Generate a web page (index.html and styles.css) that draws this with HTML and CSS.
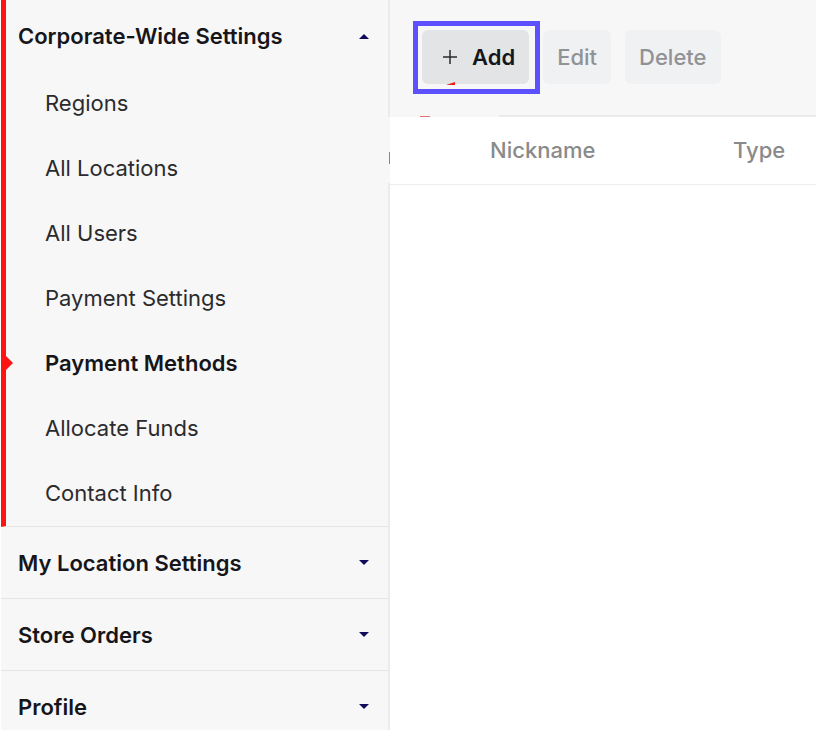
FILE: index.html
```html
<!DOCTYPE html>
<html lang="en">
<head>
  <meta charset="UTF-8">
  <title>Payment Methods</title>
  <link rel="stylesheet" href="styles.css">
</head>
<body>

  <div class="layout">
    <!-- Sidebar -->
    <nav class="sidebar">
      <div class="group open">
        <button class="group-title">Corporate-Wide Settings
          <svg class="caret" viewBox="0 0 10 6"><path d="M0 6 L5 1 L10 6 Z"/></svg>
        </button>
        <ul class="menu">
          <li><a href="#">Regions</a></li>
          <li><a href="#">All Locations</a></li>
          <li><a href="#">All Users</a></li>
          <li><a href="#">Payment Settings</a></li>
          <li class="active"><a href="#">Payment Methods</a></li>
          <li><a href="#">Allocate Funds</a></li>
          <li><a href="#">Contact Info</a></li>
        </ul>
      </div>
      <div class="group">
        <button class="group-title">My Location Settings
          <svg class="caret" viewBox="0 0 10 6"><path d="M0 0 L5 5 L10 0 Z"/></svg>
        </button>
      </div>
      <div class="group">
        <button class="group-title">Store Orders
          <svg class="caret" viewBox="0 0 10 6"><path d="M0 0 L5 5 L10 0 Z"/></svg>
        </button>
      </div>
      <div class="group">
        <button class="group-title">Profile
          <svg class="caret" viewBox="0 0 10 6"><path d="M0 0 L5 5 L10 0 Z"/></svg>
        </button>
      </div>
    </nav>

    <!-- Content -->
    <main class="content">
      <div class="toolbar">
        <div class="highlight">
          <button class="btn btn-add">
            <svg class="plus" viewBox="0 0 16 16"><path d="M8 1 V15 M1 8 H15"/></svg>
            Add
          </button>
          <svg class="mark mark-tip" viewBox="0 0 10 3"><path d="M0 3 L9 0 L9 3 Z"/></svg>
        </div>
        <button class="btn" disabled>Edit</button>
        <button class="btn" disabled>Delete</button>
      </div>
      <table class="methods">
        <thead>
          <tr><th class="col-check"></th><th class="col-name">Nickname</th><th>Type</th></tr>
        </thead>
      </table>
      <span class="mark mark-top"></span>
      <span class="mark mark-side"></span>
    </main>
  </div>

</body>
</html>
```
FILE: styles.css
```css
* {
  box-sizing: border-box;
}
body {
  margin: 0;
  font-family: Inter, "Liberation Sans", sans-serif;
  font-size: 22px;
  color: #16161a;
  background: #fff;
}
.layout {
  display: flex;
  height: 100vh;
  overflow: hidden;
  padding-left: 1px;
}
button {
  font: inherit;
  color: inherit;
  border: none;
}
/* Sidebar */
.sidebar {
  flex: none;
  width: 389px;
  background: #f7f7f7;
  border-right: 2px solid #ebebeb;
}
.group {
  border-bottom: 1px solid #e4e4e4;
}
.group-title {
  display: flex;
  align-items: center;
  justify-content: space-between;
  width: 100%;
  height: 71px;
  padding: 0 19px 0 17px;
  background: none;
  font-weight: 600;
}
.caret {
  width: 10px;
  height: 6px;
  fill: #120a5c;
}
.open {
  border-left: 5px solid #ff1414;
}
.open .group-title {
  padding-left: 12px;
}
.menu {
  list-style: none;
  margin: 0;
  padding: 0;
}
.menu li {
  position: relative;
}
.menu a {
  display: block;
  padding-left: 39px;
  line-height: 65px;
  color: #2b2b2e;
  text-decoration: none;
}
.menu .active a {
  color: #16161a;
  font-weight: 600;
}
.active::before {
  content: "";
  position: absolute;
  left: 0;
  top: 25px;
  border: 7px solid transparent;
  border-left-color: #ff1414;
  border-right: none;
}
/* Content */
.content {
  flex: 1;
  position: relative;
}
.toolbar {
  display: flex;
  align-items: center;
  gap: 14px;
  height: 117px;
  padding: 0 32px 1px;
  background: #f7f7f7;
  border-bottom: 2px solid #ebebeb;
}
.btn {
  height: 54px;
  padding: 0 14px;
  border-radius: 6px;
  background: #f0f1f3;
  color: #909296;
  font-weight: 500;
}
.highlight {
  position: relative;
}
.highlight::after {
  content: "";
  position: absolute;
  inset: -9px -11px -10px -9px;
  border: 5px solid #5c50ff;
  pointer-events: none;
}
.btn-add {
  display: flex;
  align-items: center;
  gap: 14px;
  padding-left: 20px;
  background: #e3e4e6;
  color: #16161a;
  font-weight: 600;
}
.plus {
  width: 16px;
  height: 16px;
  fill: none;
  stroke: #2b2b2e;
  stroke-width: 1.5;
}
.methods {
  width: 100%;
  border-collapse: collapse;
  table-layout: fixed;
}
.methods th {
  height: 67px;
  padding: 0;
  border-bottom: 1px solid #eee;
  color: #8a8a8a;
  font-weight: 500;
  text-align: left;
}
.col-check {
  width: 100px;
}
.col-name {
  width: 243px;
}
.mark {
  position: absolute;
}
.mark-tip {
  left: 24px;
  bottom: -1px;
  width: 10px;
  height: 3px;
  fill: #e82020;
}
.mark-top {
  left: 0;
  top: 115px;
  width: 109px;
  height: 2px;
  background: linear-gradient(#e87070, #e87070) 30px 100% / 10px 1px no-repeat #f7f7f7;
}
.mark-side {
  left: -2px;
  top: 117px;
  width: 2px;
  height: 66px;
  background: linear-gradient(#e06060, #e06060) 100% 35px / 1px 12px no-repeat #f7f7f7;
}
```
